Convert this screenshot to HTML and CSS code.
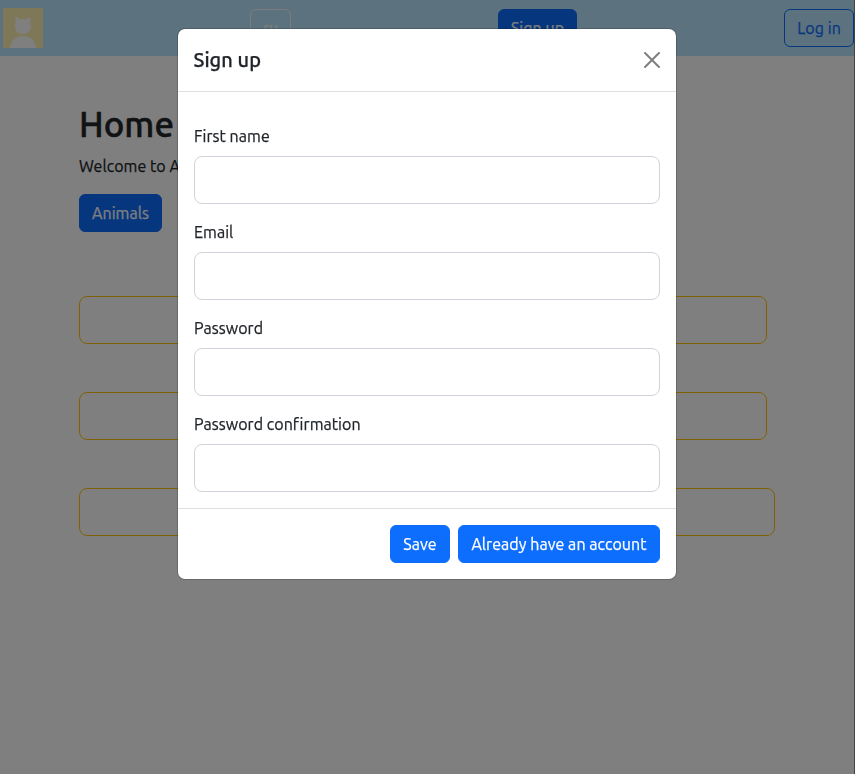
FILE: index.html
```html
<!DOCTYPE html>
<html lang="en">
<head>
<meta charset="utf-8">
<title>Home</title>
<link rel="stylesheet" href="styles.css">
</head>
<body>
<div class="page">
  <nav class="navbar">
    <svg class="avatar" viewBox="0 0 40 40" aria-hidden="true">
      <rect width="40" height="40" fill="#fff0b0"/>
      <path d="M12.5 10.2Q12.7 8.6 14 9.2L17 11.4Q20 10.4 23.2 11.4L26 9.2Q27.3 8.6 27.4 10.2V16Q28.6 20 26.5 23Q24 26 20 26T13.5 23Q11.3 20 12.5 16Z" fill="#fff"/>
      <path d="M7 40C8 32 13 28 20 28S32 32 33 40Z" fill="#fff"/>
    </svg>
    <a class="btn btn-light lang"><span>ru</span></a>
    <a class="btn btn-primary signup"><span>Sign up</span></a>
    <a class="btn btn-outline login"><span>Log in</span></a>
  </nav>
  <main class="content">
    <h1>Home</h1>
    <p>Welcome to Animals</p>
    <a class="btn btn-primary animals"><span>Animals</span></a>
    <div class="panels">
      <div class="panel"></div>
      <div class="panel"></div>
      <div class="panel wide"></div>
    </div>
  </main>
</div>
<div class="backdrop"></div>
<div class="modal" role="dialog" aria-label="Sign up">
  <form class="dialog">
    <header class="dialog-header">
      <h2>Sign up</h2>
      <svg class="close" viewBox="0 0 16 16" aria-hidden="true"><path d="M.293.293a1 1 0 0 1 1.414 0L8 6.586 14.293.293a1 1 0 1 1 1.414 1.414L9.414 8l6.293 6.293a1 1 0 0 1-1.414 1.414L8 9.414l-6.293 6.293a1 1 0 0 1-1.414-1.414L6.586 8 .293 1.707a1 1 0 0 1 0-1.414z"/></svg>
    </header>
    <div class="dialog-body">
      <label for="name">First name</label>
      <input id="name" type="text">
      <label for="email">Email</label>
      <input id="email" type="email">
      <label for="password">Password</label>
      <input id="password" type="password">
      <label for="confirm">Password confirmation</label>
      <input id="confirm" type="password">
    </div>
    <footer class="dialog-footer">
      <a class="btn btn-primary save"><span>Save</span></a>
      <a class="btn btn-primary existing"><span>Already have an account</span></a>
    </footer>
  </form>
</div>
</body>
</html>
```
FILE: styles.css
```css
* { box-sizing: border-box; }
body {
  margin: 0;
  height: 774px;
  overflow: hidden;
  background: #fff;
  color: #212529;
  font: 16px/24px Ubuntu, "Noto Sans", sans-serif;
  letter-spacing: 0.05px;
  -webkit-text-stroke: 0.25px currentColor;
}
.page { height: 774px; border-right: 1px solid #888; }
.navbar {
  display: flex;
  align-items: center;
  justify-content: space-between;
  height: 56px;
  padding-left: 3px;
  background: #b9e7ff;
}
.avatar { width: 40px; height: 40px; }
.btn {
  display: flex;
  justify-content: center;
  height: 38px;
  padding: 6px 0;
  border: 1px solid;
  border-radius: 6px;
  white-space: nowrap;
}
.btn-primary { color: #fff; background: #0d6efd; border-color: #0d6efd; }
.btn-outline { color: #0d6efd; border-color: #0d6efd; }
.btn-light { color: #f8f9fa; border-color: #f8f9fa; }
.lang { width: 41px; }
.signup { width: 79px; }
.login { width: 70px; }
.animals { width: 83px; }
.save { width: 60px; }
.existing { width: 202px; }
.content { padding: 45px 79px 0; }
h1 { margin: 0 0 5px; font-size: 34.8px; line-height: 48px; font-weight: 500; -webkit-text-stroke-width: 0.5px; }
p { margin: 0 0 16px; }
.panels { display: grid; gap: 48px; margin-top: 64px; }
.panel { width: 688px; height: 48px; border: 1px solid #ffc107; border-radius: 8px; }
.wide { width: 696px; }
.backdrop { position: fixed; inset: 0; background: rgba(0, 0, 0, .5); }
.modal { position: fixed; inset: 0; padding: 28px 0 0 177px; }
.dialog {
  width: 500px;
  border: 1px solid rgba(0, 0, 0, .175);
  border-radius: 8px;
  background: #fff;
  background-clip: padding-box;
}
.dialog-header {
  display: flex;
  align-items: center;
  justify-content: space-between;
  height: 63px;
  padding: 0 16px 0 15.5px;
  border-bottom: 1px solid #dee2e6;
}
h2 { margin: 0; font-size: 20px; line-height: 30px; font-weight: 500; }
.close { width: 16px; height: 16px; opacity: .5; }
.dialog-body { padding: 32px 16px 16px; }
label { display: block; margin-bottom: 8px; }
input {
  display: block;
  width: 466px;
  height: 48px;
  margin: 0 0 16px;
  border: 1px solid #ced4da;
  border-radius: 8px;
  background: #fff;
}
input:last-child { margin-bottom: 0; }
.dialog-footer {
  display: flex;
  align-items: center;
  justify-content: flex-end;
  gap: 8px;
  height: 71px;
  padding: 0 16px;
  border-top: 1px solid #dee2e6;
}
```
